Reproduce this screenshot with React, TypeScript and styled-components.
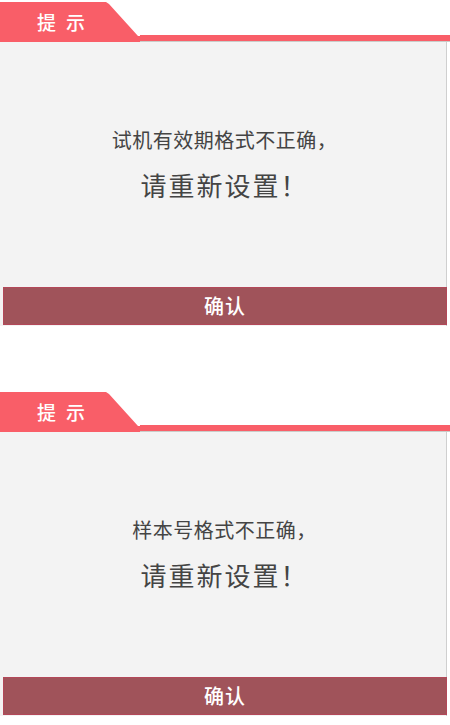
import React from 'react';
import styled, { createGlobalStyle } from 'styled-components';

const GlobalStyle = createGlobalStyle`
    html, body {
        margin: 0;
        padding: 0;
        background: #ffffff;
    }
    body {
        font-family: "Noto Sans CJK SC", "Noto Sans", sans-serif;
    }
`;

const Page = styled.div`
    display: flex;
    flex-direction: column;
    gap: 64px;
    width: 450px;
`;

const Dialog = styled.div`
    display: flex;
    flex-direction: column;
`;

const Header = styled.div`
    display: flex;
    align-items: flex-end;
    height: 42px;
`;

const Tab = styled.div`
    width: 140px;
    height: 41px;
    flex-shrink: 0;
    background: #f95e68;
    clip-path: polygon(0 1px, 106px 1px, 109px 3px, 138px 35px, 140px 35px, 140px 41px, 0 41px);
    display: flex;
    align-items: center;
    padding-left: 37px;
    padding-bottom: 1px;
    box-sizing: border-box;
`;

const TabTitle = styled.span`
    color: #ffffff;
    font-size: 19px;
    font-weight: 500;
    line-height: 1;
    letter-spacing: 10px;
`;

const Bar = styled.div`
    flex: 1;
    height: 6px;
    background: #f95e68;
    border-bottom: 1px solid #c9cdc9;
`;

const Body = styled.div`
    display: flex;
    flex-direction: column;
    width: 447px;
    height: 284px;
    background: #f3f3f3;
    border-right: 1px solid #cfcfcf;
    padding: 0 0 1px 3px;
    box-sizing: border-box;
`;

const Message = styled.div`
    flex: 1;
    display: flex;
    flex-direction: column;
    align-items: center;
    justify-content: center;
    gap: 20px;
    color: #444444;
    padding-bottom: 1px;
`;

const Line = styled.div<{ size: number; spacing: number }>`
    font-size: ${props => props.size}px;
    letter-spacing: ${props => props.spacing}px;
    line-height: 1.1;
`;

const ConfirmButton = styled.button`
    height: 38px;
    width: 444px;
    margin: 0;
    padding: 0 0 2px;
    border: 1px solid #b34859;
    background: #a0535a;
    color: #ffffff;
    font-family: inherit;
    font-size: 20px;
    font-weight: 500;
    letter-spacing: 1px;
    cursor: pointer;
`;

type PromptProps = {
    first: string;
    second: string;
};

const Prompt = ({ first, second }: PromptProps) => (
    <Dialog>
        <Header>
            <Tab>
                <TabTitle>提示</TabTitle>
            </Tab>
            <Bar />
        </Header>
        <Body>
            <Message>
                <Line size={20} spacing={0.5}>
                    {first}
                </Line>
                <Line size={26} spacing={2}>
                    {second}
                </Line>
            </Message>
            <ConfirmButton type="button">确认</ConfirmButton>
        </Body>
    </Dialog>
);

const App = () => (
    <>
        <GlobalStyle />
        <Page>
            <Prompt first="试机有效期格式不正确，" second="请重新设置！" />
            <Prompt first="样本号格式不正确，" second="请重新设置！" />
        </Page>
    </>
);

export default App;
